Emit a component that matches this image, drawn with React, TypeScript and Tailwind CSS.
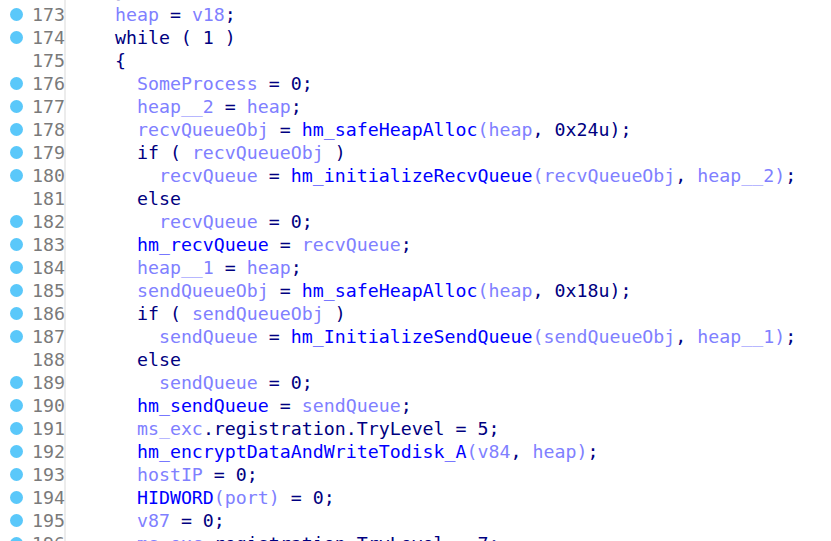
import React from "react";

// token colours: n = plain text, f = names/functions, v = local variables
const colors: Record<string, string> = {
  n: "text-[#000080]",
  f: "text-[#0000ff]",
  v: "text-[#8080ff]",
};

type Tok = [string, string];

const lines: { no: number; dot: boolean; toks: Tok[] }[] = [
  { no: 172, dot: false, toks: [["    }", "n"]] },
  { no: 173, dot: true, toks: [["    ", "n"], ["heap", "v"], [" = ", "n"], ["v18", "v"], [";", "n"]] },
  { no: 174, dot: true, toks: [["    while ( 1 )", "n"]] },
  { no: 175, dot: false, toks: [["    {", "n"]] },
  { no: 176, dot: true, toks: [["      ", "n"], ["SomeProcess", "v"], [" = 0;", "n"]] },
  { no: 177, dot: true, toks: [["      ", "n"], ["heap__2", "v"], [" = ", "n"], ["heap", "v"], [";", "n"]] },
  { no: 178, dot: true, toks: [["      ", "n"], ["recvQueueObj", "v"], [" = ", "n"], ["hm_safeHeapAlloc", "f"], ["(heap", "v"], [", 0x24u);", "n"]] },
  { no: 179, dot: true, toks: [["      if ( ", "n"], ["recvQueueObj", "v"], [" )", "n"]] },
  { no: 180, dot: true, toks: [["        ", "n"], ["recvQueue", "v"], [" = ", "n"], ["hm_initializeRecvQueue", "f"], ["(recvQueueObj", "v"], [", ", "n"], ["heap__2)", "v"], [";", "n"]] },
  { no: 181, dot: false, toks: [["      else", "n"]] },
  { no: 182, dot: true, toks: [["        ", "n"], ["recvQueue", "v"], [" = 0;", "n"]] },
  { no: 183, dot: true, toks: [["      ", "n"], ["hm_recvQueue", "f"], [" = ", "n"], ["recvQueue", "v"], [";", "n"]] },
  { no: 184, dot: true, toks: [["      ", "n"], ["heap__1", "v"], [" = ", "n"], ["heap", "v"], [";", "n"]] },
  { no: 185, dot: true, toks: [["      ", "n"], ["sendQueueObj", "v"], [" = ", "n"], ["hm_safeHeapAlloc", "f"], ["(heap", "v"], [", 0x18u);", "n"]] },
  { no: 186, dot: true, toks: [["      if ( ", "n"], ["sendQueueObj", "v"], [" )", "n"]] },
  { no: 187, dot: true, toks: [["        ", "n"], ["sendQueue", "v"], [" = ", "n"], ["hm_InitializeSendQueue", "f"], ["(sendQueueObj", "v"], [", ", "n"], ["heap__1)", "v"], [";", "n"]] },
  { no: 188, dot: false, toks: [["      else", "n"]] },
  { no: 189, dot: true, toks: [["        ", "n"], ["sendQueue", "v"], [" = 0;", "n"]] },
  { no: 190, dot: true, toks: [["      ", "n"], ["hm_sendQueue", "f"], [" = ", "n"], ["sendQueue", "v"], [";", "n"]] },
  { no: 191, dot: true, toks: [["      ", "n"], ["ms_exc", "v"], [".registration.TryLevel = 5;", "n"]] },
  { no: 192, dot: true, toks: [["      ", "n"], ["hm_encryptDataAndWriteTodisk_A", "f"], ["(v84", "v"], [", ", "n"], ["heap)", "v"], [";", "n"]] },
  { no: 193, dot: true, toks: [["      ", "n"], ["hostIP", "v"], [" = 0;", "n"]] },
  { no: 194, dot: true, toks: [["      ", "n"], ["HIDWORD", "f"], ["(port)", "v"], [" = 0;", "n"]] },
  { no: 195, dot: true, toks: [["      ", "n"], ["v87", "v"], [" = 0;", "n"]] },
  { no: 196, dot: true, toks: [["      ", "n"], ["ms_exc", "v"], [".registration.TryLevel = 7;", "n"]] },
];

export default function App() {
  return (
    <div className="h-[541px] w-[831px] overflow-hidden bg-white font-['DejaVu_Sans_Mono',monospace] text-[18.25px]">
      <div className="-mt-[20px] flex flex-col">
        {lines.map((l) => (
          <div key={l.no} className="flex h-[23px] items-center">
            <div className="flex h-full w-[66px] shrink-0 items-center border-r-2 border-[#ececec]">
              <div className="flex w-[32px] shrink-0 justify-center">
                {l.dot && <div className="h-[13px] w-[13px] shrink-0 rounded-full bg-[#5ac8fa]" />}
              </div>
              <span className="w-[31px] text-right text-[#7a7a7a]">{l.no}</span>
            </div>
            <div className="whitespace-pre pl-[5px]">
              {l.toks.map((t, i) => (
                <span key={i} className={colors[t[1]]}>
                  {t[0]}
                </span>
              ))}
            </div>
          </div>
        ))}
      </div>
    </div>
  );
}
